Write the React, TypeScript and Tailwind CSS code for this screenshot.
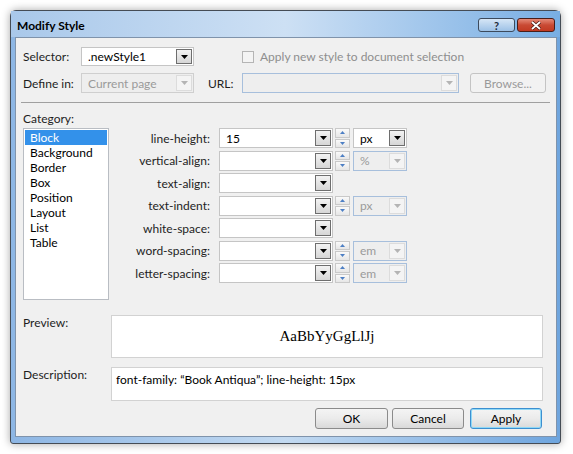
import React from 'react';

// Small triangle used by drop-down buttons
function Arrow({ disabled }: { disabled?: boolean }) {
    return (
        <svg width="7" height="4" viewBox="0 0 7 4">
            <path d="M0 0 L7 0 L3.5 4 Z" fill={disabled ? '#b4b4b4' : '#000'} />
        </svg>
    );
}

// Drop-down button inside a combo box
function DropButton({ disabled }: { disabled?: boolean }) {
    return (
        <div
            className={
                disabled
                    ? 'w-[16px] h-full flex items-center justify-center border border-[#dcdcdc] bg-[#f4f4f4]'
                    : 'w-[16px] h-full flex items-center justify-center border border-[#6e6e6e] bg-gradient-to-b from-[#f3f3f3] to-[#d6d6d6]'
            }
        >
            <Arrow disabled={disabled} />
        </div>
    );
}

interface ComboProps {
    value?: string;
    width: string;
    disabled?: boolean;
    blue?: boolean;
}

// Combo box
function Combo({ value = '', width, disabled, blue }: ComboProps) {
    const border = blue ? 'border-[#a7bfdc]' : disabled ? 'border-[#cfcfcf]' : 'border-[#c5c5c5]';
    return (
        <div
            className={`${width} h-full flex items-center border ${border} ${disabled ? 'bg-[#eeeeee] text-[#9a9a9a]' : 'bg-white text-black'} p-[1px]`}
        >
            <span className="flex-1 pl-[5px] whitespace-nowrap overflow-hidden leading-[15px]">{value}</span>
            <DropButton disabled={disabled} />
        </div>
    );
}

// Up/down spinner
function Spinner() {
    return (
        <div className="w-[15px] h-full flex flex-col gap-[1px] ml-[2px]">
            <div className="flex-1 flex items-center justify-center border border-[#c9c9c9] bg-gradient-to-b from-[#fafafa] to-[#e6e6e6]">
                <svg width="5" height="3" viewBox="0 0 5 3">
                    <path d="M0 3 L5 3 L2.5 0 Z" fill="#4d7fc4" />
                </svg>
            </div>
            <div className="flex-1 flex items-center justify-center border border-[#c9c9c9] bg-gradient-to-b from-[#fafafa] to-[#e6e6e6]">
                <svg width="5" height="3" viewBox="0 0 5 3">
                    <path d="M0 0 L5 0 L2.5 3 Z" fill="#4d7fc4" />
                </svg>
            </div>
        </div>
    );
}

// Windows 7 style push button
function PushButton({ label, width, focused }: { label: string; width: string; focused?: boolean }) {
    return (
        <div
            className={`${width} h-[21px] rounded-[3px] border ${focused ? 'border-[#3c8fd0] shadow-[inset_0_0_0_1px_#8fd8f6]' : 'border-[#8b8b8b]'} bg-gradient-to-b from-[#f4f4f4] via-[#ebebeb] to-[#d9d9d9] flex items-center justify-center text-black`}
        >
            {label}
        </div>
    );
}

const rows = [
    { label: 'line-height:', value: '15', unit: 'px', unitEnabled: true, spin: true },
    { label: 'vertical-align:', value: '', unit: '%', unitEnabled: false, spin: true },
    { label: 'text-align:', value: '', unit: '', unitEnabled: false, spin: false },
    { label: 'text-indent:', value: '', unit: 'px', unitEnabled: false, spin: true },
    { label: 'white-space:', value: '', unit: '', unitEnabled: false, spin: false },
    { label: 'word-spacing:', value: '', unit: 'em', unitEnabled: false, spin: true },
    { label: 'letter-spacing:', value: '', unit: 'em', unitEnabled: false, spin: true },
];

const categories = ['Block', 'Background', 'Border', 'Box', 'Position', 'Layout', 'List', 'Table'];

export default function App() {
    return (
        <div
            className="w-[573px] h-[454px] bg-white pt-[10px] pl-[10px] text-[12px] leading-[15px] text-[#1e1e1e]"
            style={{ fontFamily: '"Segoe UI", Lato, "Noto Sans", sans-serif' }}
        >
            {/* Window frame */}
            <div className="w-[551px] h-[434px] rounded-t-[6px] rounded-b-[3px] border border-[#454c55] bg-gradient-to-r from-[#8db6e4] via-[#c3daf1] to-[#6ea5de] shadow-[0_0_9px_rgba(0,0,0,0.35)] flex flex-col">
                {/* Title bar */}
                <div className="h-[26px] flex items-start bg-gradient-to-r from-[#a9c8ea] via-[#cde0f4] to-[#78aee3]">
                    <div className="pl-[6px] pt-[7px] font-bold text-[12px] text-black leading-[15px]">Modify Style</div>
                    <div className="ml-auto mt-[7px] mr-[5px] flex gap-[2px]">
                        <div className="w-[37px] h-[14px] rounded-[3px] border border-[#3c4a5c] bg-gradient-to-b from-[#d6e6f6] to-[#9dc1e6] flex items-center justify-center text-[11px] font-bold text-[#1d2a3a] leading-none">
                            ?
                        </div>
                        <div className="w-[38px] h-[14px] rounded-[3px] border border-[#4a1d18] bg-gradient-to-b from-[#e48a78] via-[#c94a34] to-[#c13a22] flex items-center justify-center">
                            <svg width="10" height="9" viewBox="0 0 10 9">
                                <path d="M1 1 L9 8 M9 1 L1 8" stroke="#3a1510" strokeWidth="3.2" />
                                <path d="M1 1 L9 8 M9 1 L1 8" stroke="#ffffff" strokeWidth="1.8" />
                            </svg>
                        </div>
                    </div>
                </div>

                {/* Client area */}
                <div className="ml-[4px] mr-[3px] mb-[6px] flex-1 border border-[#7f93ab] bg-[#f0f0f0] flex flex-col">
                    {/* Selector row */}
                    <div className="mt-[9px] pl-[7px] h-[19px] flex items-center">
                        <div className="w-[58px]">Selector:</div>
                        <Combo value=".newStyle1" width="w-[113px]" />
                        <div className="ml-[48px] w-[12px] h-[12px] border border-[#b5b5b5] bg-[#f4f4f4]" />
                        <div className="ml-[6px] text-[#8e8e8e]">Apply new style to document selection</div>
                    </div>

                    {/* Define in row */}
                    <div className="mt-[7px] pl-[7px] h-[20px] flex items-center">
                        <div className="w-[58px]">Define in:</div>
                        <Combo value="Current page" width="w-[113px]" disabled />
                        <div className="ml-[14px] w-[34px]">URL:</div>
                        <Combo width="w-[217px]" disabled blue />
                        <div className="ml-[11px] w-[76px] h-full rounded-[3px] border border-[#c4c4c4] bg-[#f2f2f2] flex items-center justify-center text-[#9a9a9a]">
                            Browse...
                        </div>
                    </div>

                    {/* Separator */}
                    <div className="mt-[9px] ml-[5px] w-[529px] h-[1px] bg-[#a0a0a0]" />

                    {/* Category and properties */}
                    <div className="pl-[7px] flex">
                        <div className="flex flex-col">
                            <div className="mt-[8px]">Category:</div>
                            <div className="mt-[2px] w-[86px] h-[172px] border border-[#b9bdc3] bg-white p-[1px] text-black">
                                {categories.map((c, i) => (
                                    <div
                                        key={c}
                                        className={`h-[15px] pl-[5px] ${i === 0 ? 'bg-[#3391ea] text-white' : ''}`}
                                    >
                                        {c}
                                    </div>
                                ))}
                            </div>
                        </div>

                        <div className="pt-[25px] flex flex-col gap-[2.5px]">
                            {rows.map(r => (
                                <div key={r.label} className="h-[20px] flex items-center">
                                    <div className="w-[101px] text-right">{r.label}</div>
                                    <div className="ml-[9px] h-full flex">
                                        <Combo value={r.value} width="w-[114px]" />
                                        {r.spin && <Spinner />}
                                        {r.spin && (
                                            <div className="ml-[3px] h-full">
                                                <Combo
                                                    value={r.unit}
                                                    width="w-[54px]"
                                                    disabled={!r.unitEnabled}
                                                    blue={!r.unitEnabled}
                                                />
                                            </div>
                                        )}
                                    </div>
                                </div>
                            ))}
                        </div>
                    </div>

                    {/* Preview */}
                    <div className="mt-[15px] pl-[7px] flex">
                        <div className="w-[88px]">Preview:</div>
                        <div
                            className="w-[432px] h-[43px] border border-[#d2d2d2] bg-white flex items-center justify-center text-[15px] text-black"
                            style={{ fontFamily: '"Book Antiqua", "Palatino Linotype", "Liberation Serif", serif' }}
                        >
                            AaBbYyGgLlJj
                        </div>
                    </div>

                    {/* Description */}
                    <div className="mt-[9px] pl-[7px] flex">
                        <div className="w-[88px]">Description:</div>
                        <div className="w-[432px] h-[34px] border border-[#d2d2d2] bg-white pl-[4px] pt-[4px] text-black">
                            font-family: “Book Antiqua”; line-height: 15px
                        </div>
                    </div>

                    {/* Buttons */}
                    <div className="mt-[7px] pr-[14px] flex justify-end gap-[4px]">
                        <PushButton label="OK" width="w-[73px]" />
                        <PushButton label="Cancel" width="w-[72px]" />
                        <div className="ml-[2px]">
                            <PushButton label="Apply" width="w-[72px]" focused />
                        </div>
                    </div>
                </div>
            </div>
        </div>
    );
}
